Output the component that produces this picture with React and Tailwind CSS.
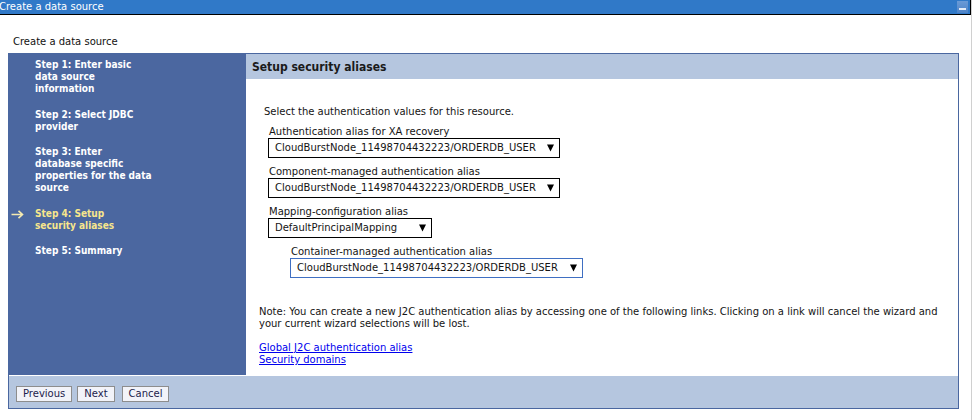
export default function App() {
  const Arrow = () => (
    <svg width="7" height="8" viewBox="0 0 7 8" className="shrink-0">
      <polygon points="0,0.5 7,0.5 3.5,7.5" fill="#000" />
    </svg>
  );
  const Sel = ({ cls, text }) => (
    <div className={cls}>
      <span className="whitespace-nowrap">{text}</span>
      <Arrow />
    </div>
  );
  const selBase = "h-[20px] bg-white flex items-center justify-between pl-[6px] pr-[5px] border";
  const link = "text-[#0000ee] underline underline-offset-[1px]";
  const btn = "h-[16px] px-[6px] bg-[#f2f3f9] border border-[#8d8d8d] text-[#1c1c4c] text-[10px] leading-[12px]";
  return (
    <div className="w-[978px] h-[420px] bg-white overflow-hidden font-['DejaVu_Sans',Verdana,sans-serif] text-[10px] leading-[12px] text-black">
      <div className="w-[972px] h-full border-r border-[#d0d0d0]">
        {/* title bar */}
        <div className="h-[15px] bg-[#3079c8] border-b border-r border-black flex items-center justify-between">
          <span className="text-white -ml-[1px] whitespace-nowrap">Create a data source</span>
          <div className="w-[11px] h-[12px] mr-[2px] bg-gradient-to-b from-[#6a9ad6] to-[#4f84c8] flex items-end justify-center pb-[3px]">
            <div className="w-[7px] h-[2px] bg-[#e4ecf7]" />
          </div>
        </div>

        <div className="pl-[13px] pt-[21px] h-[33px] text-[#111]">Create a data source</div>
        <div className="mt-[5px] ml-[8px] w-[951px] border border-[#4a67a0]">
          <div className="flex h-[321px]">
            {/* nav */}
            <div className="w-[237px] bg-[#4b67a0] pt-[5px] font-bold text-white font-['DejaVu_Sans_Condensed','DejaVu_Sans',sans-serif] text-[10px]">
              <div className="pl-[26px] mb-[14px]">Step 1: Enter basic<br />data source<br />information</div>
              <div className="pl-[26px] mb-[13px]">Step 2: Select JDBC<br />provider</div>
              <div className="pl-[26px] mb-[14px]">Step 3: Enter<br />database specific<br />properties for the data<br />source</div>
              <div className="flex mb-[13px] text-[#f7e68c]">
                <div className="w-[26px] pl-[2px] pt-[2px]">
                  <svg width="13" height="9" viewBox="0 0 13 9">
                    <path d="M0.5 4.5 H11.5 M7.5 0.8 L11.5 4.5 L7.5 8.2" stroke="#f5eab0" strokeWidth="1.6" fill="none" />
                  </svg>
                </div>
                <div>Step 4: Setup<br />security aliases</div>
              </div>
              <div className="pl-[26px]">Step 5: Summary</div>
            </div>
            {/* content */}
            <div className="flex-1 flex flex-col">
              <div className="h-[25px] bg-[#b5c6df] flex items-center pl-[6px] font-bold text-[12px] text-[#1a1a1a] font-['DejaVu_Sans_Condensed','DejaVu_Sans',sans-serif]">Setup security aliases</div>
              <div className="pl-[13px] pt-[27px] text-[#141414]">
                <div className="ml-[5px]">Select the authentication values for this resource.</div>
                <div className="ml-[9px] mt-[8px]">
                  <div className="pl-[1px]">Authentication alias for XA recovery</div>
                  <Sel cls={selBase + " w-[292px] border-black"} text="CloudBurstNode_11498704432223/ORDERDB_USER" />
                </div>
                <div className="ml-[9px] mt-[8px]">
                  <div className="pl-[1px]">Component-managed authentication alias</div>
                  <Sel cls={selBase + " w-[292px] border-black"} text="CloudBurstNode_11498704432223/ORDERDB_USER" />
                </div>
                <div className="ml-[9px] mt-[8px]">
                  <div className="pl-[1px]">Mapping-configuration alias</div>
                  <Sel cls={selBase + " w-[164px] border-black"} text="DefaultPrincipalMapping" />
                </div>
                <div className="ml-[31px] mt-[8px]">
                  <div className="pl-[1px]">Container-managed authentication alias</div>
                  <Sel cls={selBase + " w-[293px] border-[#3f6fc2]"} text="CloudBurstNode_11498704432223/ORDERDB_USER" />
                </div>
                <div className="mt-[28px] pr-[6px]">Note: You can create a new J2C authentication alias by accessing one of the following links. Clicking on a link will cancel the wizard and your current wizard selections will be lost.</div>
                <div className="mt-[12px]"><span className={link}>Global J2C authentication alias</span></div>
                <div><span className={link}>Security domains</span></div>
              </div>
            </div>
          </div>
          {/* bottom bar */}
          <div className="h-[33px] border-t border-white bg-[#b5c6df] flex items-start pt-[10px] pl-[7px] gap-[5px]">
            <button className={btn}>Previous</button>
            <button className={btn}>Next</button>
            <button className={btn + " ml-[2px]"}>Cancel</button>
          </div>
        </div>
      </div>
    </div>
  );
}
